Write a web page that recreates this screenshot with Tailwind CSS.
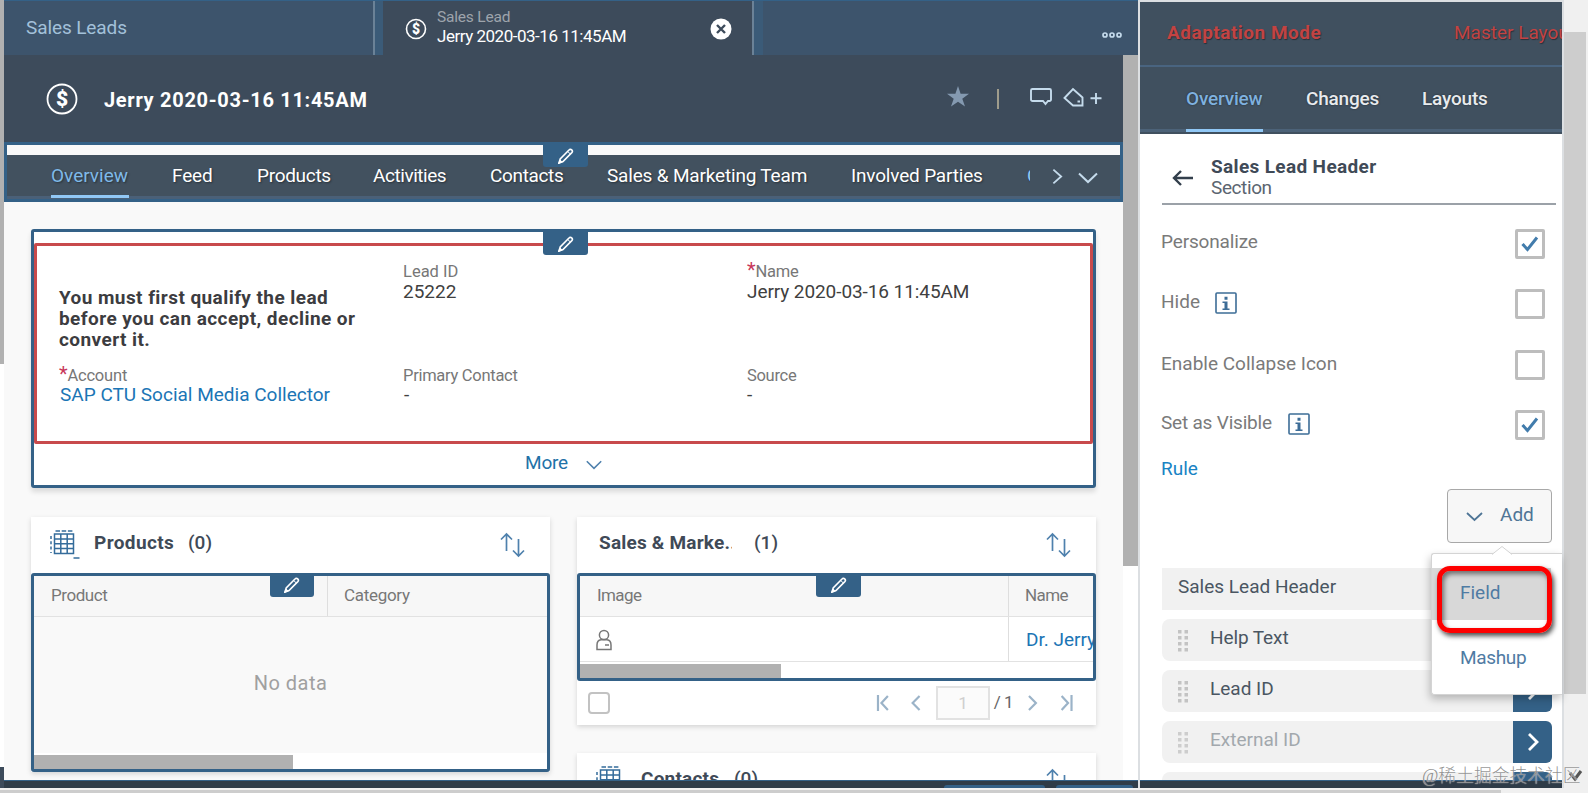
<!DOCTYPE html>
<html lang="en">
<head>
    <meta charset="UTF-8">
    <meta name="viewport" content="width=device-width, initial-scale=1.0">
    <title>Sales Lead - Adaptation Mode</title>
    <script src="https://cdn.jsdelivr.net/npm/@tailwindcss/browser@4"></script>
</head>
<body class="overflow-hidden bg-white font-['Roboto','Noto_Sans_CJK_SC',sans-serif]">

    <!-- Shared icons -->
    <svg class="hidden">
        <symbol id="pencil" viewBox="0 0 16 16">
            <path d="M1 15l1.2-4L11 2a1.8 1.8 0 0 1 2.8 2.6L5 13.600z" fill="none" stroke="currentColor" stroke-width="1.6"/>
            <path d="M9.700 3.500l3 2.800M.6 15.400l3.600-1.400-2.200-2z" fill="currentColor" stroke="currentColor"/>
        </symbol>
        <symbol id="table" viewBox="0 0 30 30">
            <g fill="none" stroke="currentColor" stroke-width="1.500">
                <path d="M4.500 4h19v19.500h-19zM10.800 4v19.500M17.200 4v19.500M4.500 9h19M4.500 13.800h19M4.500 18.600h19"/>
                <path d="M5.500 1h17" stroke-dasharray="4.500 1.700"/>
                <path d="M1 6v17" stroke-dasharray="3 2.300"/>
                <path d="M23.500 28h6"/>
            </g>
        </symbol>
        <symbol id="sort" viewBox="0 0 26 26">
            <path d="M6.500 19V2M1 7.500L6.500 2 12 7.500M18.500 7v17M13 18.500l5.500 5.500 5.500-5.500" fill="none" stroke="currentColor" stroke-width="1.700"/>
        </symbol>
        <symbol id="down" viewBox="0 0 20 12">
            <path d="M1 1.500l9 8.500 9-8.500" fill="none" stroke="currentColor" stroke-width="2"/>
        </symbol>
        <symbol id="right" viewBox="0 0 12 18">
            <path d="M1.500 1.500L10 9l-8.500 7.500" fill="none" stroke="currentColor" stroke-width="2"/>
        </symbol>
        <symbol id="check" viewBox="0 0 18 16">
            <path d="M1.500 8l5 5.500L16 1.500" fill="none" stroke="currentColor" stroke-width="3"/>
        </symbol>
        <symbol id="info" viewBox="0 0 22 22">
            <rect x="1" y="1" width="20" height="20" rx="1" fill="none" stroke="currentColor" stroke-width="1.600"/>
            <path d="M9.500 4.800h3v3h-3zM7.500 9.500h5v7h2V18h-7v-1.500h2v-5.500h-2z" fill="currentColor"/>
        </symbol>
        <symbol id="grip" viewBox="0 0 10 22">
            <path d="M0 0h3.500v3.500H0zM6.500 0H10v3.500H6.500zM0 6h3.500v3.500H0zM6.500 6H10v3.500H6.500zM0 12h3.500v3.500H0zM6.500 12H10v3.500H6.500zM0 18h3.500v3.500H0zM6.500 18H10v3.500H6.500z" fill="currentColor"/>
        </symbol>
    </svg>

    <div class="relative flex h-[793px] w-[1588px] flex-col overflow-hidden whitespace-nowrap">
        <div class="flex h-[788px]">

            <!-- Left edge -->
            <div class="flex w-1 flex-col">
                <div class="h-[364px] bg-[#b1b1b1]"></div>
                <div class="h-[403px] bg-white"></div>
                <div class="h-[21px] bg-[#3d4b5b]"></div>
            </div>

            <!-- Main area -->
            <main class="flex w-[1134px] flex-col overflow-hidden bg-[#f9f9f9]">
                <div class="flex h-[55px] border-t border-[#346187] bg-[#3b5b78]">
                    <div class="flex w-[371px] items-center border-r-2 border-[#6b8297] bg-[#3d546c] pl-[22px] text-[19px] text-[#a3c1da]">
                        <span class="tracking-[-0.1px]">Sales Leads</span>
                    </div>
                    <div class="ml-2 flex w-[371px] border-r-2 border-[#6b8297] bg-[#3d4b5b] pl-[22px]">
                        <svg class="mt-[17px] size-[22px]" viewBox="0 0 22 22">
                            <circle cx="11" cy="11" r="9.500" fill="none" stroke="#fff" stroke-width="1.600"/>
                            <text x="11" y="16" text-anchor="middle" font-size="14" font-weight="900" fill="#fff">$</text>
                        </svg>
                        <div class="ml-[10px] w-[273px] pt-[6px]">
                            <div class="text-[15.5px] leading-[20px] tracking-[-0.2px] text-[#9da4ac]">Sales Lead</div>
                            <div class="text-[17px] leading-[18px] tracking-[-0.48px] text-white">Jerry 2020-03-16 11:45AM</div>
                        </div>
                        <svg class="mt-[17px] size-[22px]" viewBox="0 0 22 22">
                            <circle cx="11" cy="11" r="10.500" fill="#fff"/>
                            <path d="M7 7l8 8M15 7l-8 8" stroke="#3d4b5b" stroke-width="2.400"/>
                        </svg>
                    </div>
                    <div class="ml-[9px] flex flex-1 justify-end bg-[#3d546c] pr-4">
                        <svg class="mt-[31px] h-[6px] w-5" viewBox="0 0 20 6" fill="none" stroke="#c5dbec" stroke-width="1.700">
                            <circle cx="3" cy="3" r="2"/><circle cx="10" cy="3" r="2"/><circle cx="17" cy="3" r="2"/>
                        </svg>
                    </div>
                </div>

                <div class="flex h-[733px]">
                    <div class="flex w-[1119px] flex-col">
                        <header class="flex h-[87px] shrink-0 items-center bg-[#3d4b5b] pb-[1px] pl-[42px] pr-[21px]">
                            <svg class="mt-0.5 size-8" viewBox="0 0 32 32">
                                <circle cx="16" cy="16" r="14.500" fill="none" stroke="#fff" stroke-width="1.800"/>
                                <text x="16" y="23.300" text-anchor="middle" font-size="21" font-weight="900" fill="#fff">$</text>
                            </svg>
                            <h1 class="ml-[26px] mt-1 flex-1 text-[20px] font-bold tracking-[0.7px] text-white">Jerry 2020-03-16 11:45AM</h1>
                            <svg class="mb-[3px] h-[21px] w-[22px]" viewBox="0 0 22 21"><path d="M11 0l2.600 7.800H22l-6.700 5L18 20.500l-7-4.800-7 4.800 2.700-7.700L0 7.800h8.400z" fill="#8499b0"/></svg>
                            <div class="ml-[28px] mt-0.5 h-5 w-[2px] bg-[#9f9c8c]"></div>
                            <svg class="mb-[3px] ml-[31px] h-5 w-[72px]" viewBox="0 0 72 20" fill="none" stroke="#c5dbec" stroke-width="1.900">
                                <path d="M2.500 2h17a1.500 1.500 0 0 1 1.500 1.500v9a1.500 1.500 0 0 1-1.500 1.500h-1.500l-2.500 3-2.500-3H2.500A1.500 1.500 0 0 1 1 12.500v-9A1.500 1.500 0 0 1 2.500 2z"/>
                                <path d="M34.500 11l8.500-9 9.500 8.500v8H43zM47.500 14.500h2.500M60.500 11.300h11M66 6v11"/>
                            </svg>
                        </header>

                        <!-- Section navigation -->
                        <nav class="relative flex h-[60px] shrink-0 flex-col border-[3px] border-[#346187] bg-[#f9f9f9] pt-[10px]">
                            <div class="flex flex-1 border-b-[3px] border-[#4a6078] bg-[#42515f] pl-11 text-[19px] leading-[23px] tracking-[-0.18px] text-white [text-shadow:1px_1px_2px_rgba(0,0,0,0.4)]">
                                <div class="relative mr-[43px] w-[78px] pt-[9px] tracking-normal text-[#7fb9e8]">Overview
                                    <div class="absolute -bottom-0.5 left-0 h-[3px] w-full bg-[#91c8f6]"></div>
                                </div>
                                <div class="w-[85px] pt-[9px]">Feed</div>
                                <div class="w-[116px] pt-[9px] tracking-[-0.3px]">Products</div>
                                <div class="w-[117px] pt-[9px] tracking-[-0.45px]">Activities</div>
                                <div class="w-[117px] pt-[9px] tracking-[-0.35px]">Contacts</div>
                                <div class="w-[244px] pt-[9px]">Sales &amp; Marketing Team</div>
                                <div class="w-[176px] pt-[9px]">Involved Parties</div>
                                <div class="w-[3px] overflow-hidden pt-[9px] text-[#91c8f6]">C</div>
                                <svg class="ml-[22px] mt-[13px] h-[17px] w-[11px] text-[#c5dbec]"><use href="#right"/></svg>
                                <svg class="ml-[15px] mt-[17px] h-[12px] w-[20px] text-[#c5dbec]"><use href="#down"/></svg>
                            </div>
                            <div class="absolute left-[536px] top-0 flex h-[22px] w-[45px] items-center justify-center rounded-b-[3px] bg-[#346187] text-white">
                                <svg class="size-4"><use href="#pencil"/></svg>
                            </div>
                        </nav>

                        <div class="px-[27px] pt-[27px]">
                            <!-- Lead header -->
                            <section class="relative h-[259px] rounded-[3px] border-[3px] border-[#346187] bg-white pt-[11px] shadow-[0_4px_5px_rgba(0,0,0,0.12)]">
                                <div class="grid h-[201px] grid-cols-[344px_344px_1fr] grid-rows-[104px_1fr] rounded-[2px] border-[3px] border-[#c84a4c] pl-[22px] pt-[15px] text-[19px] leading-[21px] text-[#404040]">
                                    <div class="pt-[26px] font-bold tracking-[0.43px] text-[#3c3c40]">You must first qualify the lead<br>before you can accept, decline or<br>convert it.</div>
                                    <div>
                                        <div class="pt-px text-[16.5px] leading-[19px] text-[#777]">Lead ID</div>
                                        <div>25222</div>
                                    </div>
                                    <div>
                                        <div class="pt-px text-[16.5px] leading-[19px] tracking-[-0.2px] text-[#777]"><span class="text-[20px] leading-[1px] text-[#c8385a]">*</span>Name</div>
                                        <div class="tracking-[-0.08px]">Jerry 2020-03-16 11:45AM</div>
                                    </div>
                                    <div>
                                        <div class="pt-px text-[16.5px] leading-[19px] tracking-[-0.2px] text-[#777]"><span class="text-[20px] leading-[1px] text-[#c8385a]">*</span>Account</div>
                                        <div class="-mt-px pl-px text-[#1b75b5]">SAP CTU Social Media Collector</div>
                                    </div>
                                    <div>
                                        <div class="pt-px text-[16.5px] leading-[19px] tracking-[-0.28px] text-[#777]">Primary Contact</div>
                                        <div class="-mt-px pl-px">-</div>
                                    </div>
                                    <div>
                                        <div class="pt-px text-[16.5px] leading-[19px] tracking-[-0.3px] text-[#777]">Source</div>
                                        <div class="-mt-px">-</div>
                                    </div>
                                </div>
                                <div class="flex h-[38px] items-center pl-[491px] text-[19px] text-[#1f72a8]">
                                    <span class="w-[61px] tracking-[-0.2px]">More</span>
                                    <svg class="mt-[3px] h-[10px] w-[16px] text-[#4f81ad]" viewBox="0 0 20 12" preserveAspectRatio="none"><use href="#down"/></svg>
                                </div>
                                <div class="absolute left-[509px] top-0 flex h-[23px] w-[45px] items-center justify-center rounded-b-[3px] bg-[#346187] text-white">
                                    <svg class="size-4"><use href="#pencil"/></svg>
                                </div>
                            </section>

                            <div class="mt-[29px] flex gap-[27px]">
                                <!-- Products -->
                                <section class="h-[255px] w-[519px] bg-white shadow-[0_2px_5px_rgba(0,0,0,0.15)]">
                                    <div class="flex h-14 items-center pl-[19px] pr-6 text-[19px] font-bold text-[#3f4a57]">
                                        <svg class="h-[30px] w-[30px] text-[#346c9b]"><use href="#table"/></svg>
                                        <span class="ml-[14px] w-[94px] pb-[3px] tracking-[0.4px]">Products</span>
                                        <span class="flex-1 pb-[3px] font-medium">(0)</span>
                                        <svg class="size-[26px] text-[#4f81ad]"><use href="#sort"/></svg>
                                    </div>
                                    <div class="relative h-[199px] rounded-[3px] border-[3px] border-[#346187] bg-[#f9f9f9]">
                                        <div class="flex h-[41px] border-b border-[#e2e2e2] bg-[#f7f7f7] text-[17px] leading-[39px] tracking-[-0.3px] text-[#777]">
                                            <div class="w-[294px] border-r border-[#dedede] pl-[17px] tracking-[-0.45px]">Product</div>
                                            <div class="pl-4">Category</div>
                                        </div>
                                        <div class="flex h-[136px] items-center justify-center pb-[5px] text-[20px] tracking-[0.5px] text-[#a0a0a0]">No data</div>
                                        <div class="h-[16px] bg-white pt-[2px]">
                                            <div class="h-[14px] w-[259px] bg-[#b1b1b1]"></div>
                                        </div>
                                        <div class="absolute left-[236px] top-0 flex h-[21px] w-[44px] items-center justify-center rounded-b-[3px] bg-[#346187] pb-1 text-white">
                                            <svg class="size-4"><use href="#pencil"/></svg>
                                        </div>
                                    </div>
                                </section>

                                <div class="w-[519px]">
                                    <!-- Sales & marketing team -->
                                    <section class="h-[208px] bg-white shadow-[0_2px_5px_rgba(0,0,0,0.15)]">
                                        <div class="flex h-14 items-center pl-[22px] pr-6 text-[19px] font-bold text-[#3f4a57]">
                                            <span class="mr-[22px] w-[133px] overflow-hidden pb-[3px] tracking-[0.2px]">Sales &amp; Marke..</span>
                                            <span class="flex-1 pb-[3px] font-medium">(1)</span>
                                            <svg class="size-[26px] text-[#4f81ad]"><use href="#sort"/></svg>
                                        </div>
                                        <div class="relative h-[108px] rounded-[3px] border-[3px] border-[#346187]">
                                            <div class="flex h-[41px] border-b border-[#e2e2e2] bg-[#f7f7f7] text-[17px] leading-[39px] tracking-[-0.6px] text-[#777]">
                                                <div class="w-[429px] border-r border-[#dedede] pl-[17px]">Image</div>
                                                <div class="pl-4">Name</div>
                                            </div>
                                            <div class="flex h-[45px] overflow-hidden border-b border-[#e2e2e2] text-[19px] leading-[45px] text-[#1b75b5]">
                                                <div class="w-[429px] border-r border-[#dedede] pl-[16px] pt-[12px]">
                                                    <svg class="h-[22px] w-[16px]" viewBox="0 0 16 22" fill="none" stroke="#777" stroke-width="1.500">
                                                        <circle cx="8" cy="6" r="4.600"/>
                                                        <path d="M1 20.500v-4.500c0-3 1.500-5 4-5.300h6c2.500.3 4 2.300 4 5.300v4.500zM9 16h4"/>
                                                    </svg>
                                                </div>
                                                <div class="w-[84px] overflow-hidden pl-[17px]">Dr. Jerry</div>
                                            </div>
                                            <div class="h-[16px] pt-[2px]">
                                                <div class="h-[14px] w-[201px] bg-[#b1b1b1]"></div>
                                            </div>
                                            <div class="absolute left-[236px] top-0 flex h-[21px] w-[45px] items-center justify-center rounded-b-[3px] bg-[#346187] pb-1 text-white">
                                                <svg class="size-4"><use href="#pencil"/></svg>
                                            </div>
                                        </div>
                                        <div class="flex h-11 items-center pl-[11px] pr-[23px] text-[17px] text-[#666]">
                                            <div class="mr-[266px] size-[22px] rounded-[4px] border-2 border-[#c2c2c2]"></div>
                                            <svg class="h-[18px] w-[46px]" viewBox="0 0 46 18" fill="none" stroke="#9bb3c8" stroke-width="2.200">
                                                <path d="M2 1v16M12 2L5.500 9l6.500 7M44 2l-7 7 7 7"/>
                                            </svg>
                                            <div class="ml-[15px] flex h-[34px] w-[54px] items-center justify-center border-2 border-[#e2e2e2] bg-[#fbfbfb] pt-0.5 text-[#cfcfcf]">1</div>
                                            <span class="ml-[4px] w-[32px] tracking-[-0.5px]">/ 1</span>
                                            <svg class="h-[18px] w-[48px]" viewBox="0 0 48 18" fill="none" stroke="#9bb3c8" stroke-width="2.200">
                                                <path d="M3 2l7 7-7 7M36 2l6.500 7-6.500 7M46 1v16"/>
                                            </svg>
                                        </div>
                                    </section>
                                    <!-- Contacts -->
                                    <section class="mt-[28px] h-14 bg-white shadow-[0_2px_5px_rgba(0,0,0,0.15)]">
                                        <div class="flex h-14 items-center pl-[19px] pr-6 text-[19px] font-bold text-[#3f4a57]">
                                            <svg class="h-[30px] w-[30px] text-[#346c9b]"><use href="#table"/></svg>
                                            <span class="ml-[15px] w-[93px] pb-[3px] tracking-[0.2px]">Contacts</span>
                                            <span class="flex-1 pb-[3px] font-medium">(0)</span>
                                            <svg class="size-[26px] text-[#4f81ad]"><use href="#sort"/></svg>
                                        </div>
                                    </section>
                                </div>
                            </div>
                        </div>
                    </div>
                    <!-- Vertical scrollbar -->
                    <div class="w-[15px] bg-white">
                        <div class="h-[511px] bg-[#b1b1b1]"></div>
                    </div>
                </div>
            </main>

            <!-- Adaptation panel -->
            <aside class="flex w-[426px] flex-col border-l-2 border-r-2 border-[#dcdfe2] bg-white">
                <div class="h-[134px] shrink-0 border-t-2 border-[#dcdfe2] bg-[#40505f]">
                    <div class="flex h-[65px] items-center overflow-hidden border-b-2 border-[#496480] pl-[27px] text-[19px] text-[#c24343] [text-shadow:1px_1px_1px_rgba(0,0,0,0.4)]">
                        <span class="w-[287px] shrink-0 font-bold tracking-[0.5px]">Adaptation Mode</span>
                        <span class="shrink-0">Master Layout</span>
                    </div>
                    <div class="relative flex h-[65px] items-center border-b-[3px] border-[#4c6278] pl-[46px] pt-[3px] text-[19px] font-medium tracking-[-0.2px] text-[#e8ebee] [text-shadow:0_0_2px_rgba(0,0,0,0.5)]">
                        <span class="w-[120px] text-[#7fb1df]">Overview</span>
                        <span class="w-[116px]">Changes</span>
                        <span>Layouts</span>
                        <div class="absolute -bottom-[3px] left-[46px] h-[3px] w-[77px] bg-[#91c8f6]"></div>
                    </div>
                </div>

                <div class="h-[654px] overflow-hidden pl-[22px]">
                    <div class="flex h-[71px] w-[394px] border-b-2 border-[#9ba1a8] pl-[10px] pt-[22px]">
                        <svg class="mr-[18px] mt-[14px] h-4 w-[21px]" viewBox="0 0 21 16" fill="none" stroke="#333f4c" stroke-width="2.400"><path d="M21 8H2M9 1L2 8l7 7"/></svg>
                        <div class="text-[19px] leading-[21px] text-[#3f4a57]">
                            <div class="font-bold tracking-[0.35px]">Sales Lead Header</div>
                            <div class="tracking-[-0.4px] text-[#5b6570]">Section</div>
                        </div>
                    </div>
                    <div class="-ml-px w-[384px] pt-[9px] text-[19px] text-[#7a7a7a]">
                        <div class="flex h-[60px] items-center">
                            <span class="flex-1 pb-1 tracking-[-0.15px]">Personalize</span>
                            <div class="flex size-[30px] items-center justify-center rounded-[2px] border-[3px] border-[#bdbdbd] text-[#427cac]"><svg class="h-4 w-[18px]"><use href="#check"/></svg></div>
                        </div>
                        <div class="flex h-[60px] items-center">
                            <span class="w-[54px] pb-1">Hide</span>
                            <svg class="mb-[3px] mr-auto size-[22px] text-[#3d6d97]"><use href="#info"/></svg>
                            <div class="size-[30px] rounded-[2px] border-[3px] border-[#bdbdbd]"></div>
                        </div>
                        <div class="flex h-[61px] items-center">
                            <span class="flex-1 pb-px">Enable Collapse Icon</span>
                            <div class="size-[30px] rounded-[2px] border-[3px] border-[#bdbdbd]"></div>
                        </div>
                        <div class="flex h-[60px] items-center">
                            <span class="w-[127px] pb-[3px] tracking-[-0.2px]">Set as Visible</span>
                            <svg class="mb-[3px] mr-auto size-[22px] text-[#3d6d97]"><use href="#info"/></svg>
                            <div class="flex size-[30px] items-center justify-center rounded-[2px] border-[3px] border-[#bdbdbd] text-[#427cac]"><svg class="h-4 w-[18px]"><use href="#check"/></svg></div>
                        </div>
                        <div class="h-[34px] leading-[28px] text-[#1883c4]">Rule</div>
                    </div>
                    <div class="ml-[285px] flex h-[54px] w-[105px] items-center rounded-[4px] border border-[#a8a8a8] bg-[#f7f7f7] pb-0.5 pl-[18px] text-[19px] text-[#4f7596]">
                        <svg class="mr-[17px] mt-1 h-[10px] w-[17px]"><path d="M1 1l7.500 7L16 1" fill="none" stroke="currentColor" stroke-width="1.800"/></svg>
                        <span>Add</span>
                    </div>

                    <div class="mt-[25px] flex w-[390px] flex-col gap-[9px] text-[19px] text-[#4a5662]">
                        <div class="h-[42px] bg-[#f1f1f1] pl-4 leading-[38px]">Sales Lead Header</div>
                        <div class="flex h-[42px] rounded-lg bg-[#f1f1f1] pl-4 leading-[38px]">
                            <svg class="mr-[22px] mt-[11px] h-[22px] w-[10px] text-[#c3c3c3]"><use href="#grip"/></svg><span class="tracking-[-0.1px]">Help Text</span>
                        </div>
                        <div class="flex h-[42px] rounded-lg bg-[#f1f1f1] pl-4 leading-[38px]">
                            <svg class="mr-[22px] mt-[11px] h-[22px] w-[10px] text-[#c3c3c3]"><use href="#grip"/></svg><span>Lead ID</span>
                            <div class="ml-auto flex w-[39px] items-center justify-center rounded-r-md bg-[#346187] text-white"><svg class="h-[18px] w-3"><path d="M2 1l8 8-8 8" fill="none" stroke="currentColor" stroke-width="2.800"/></svg></div>
                        </div>
                        <div class="flex h-[42px] rounded-lg bg-[#f1f1f1] pl-4 leading-[38px] text-[#a2a8ad]">
                            <svg class="mr-[22px] mt-[11px] h-[22px] w-[10px] text-[#cdcdcd]"><use href="#grip"/></svg><span>External ID</span>
                            <div class="ml-auto flex w-[39px] items-center justify-center rounded-r-md bg-[#346187] text-white"><svg class="h-[18px] w-3"><path d="M2 1l8 8-8 8" fill="none" stroke="currentColor" stroke-width="2.800"/></svg></div>
                        </div>
                        <div class="flex h-[42px] rounded-lg bg-[#f1f1f1]">
                            <div class="ml-auto w-[39px] rounded-r-md bg-[#346187]"></div>
                        </div>
                    </div>
                </div>
            </aside>

            <!-- Page scrollbar -->
            <div class="w-[24px] bg-[#f0f0f0] pr-0.5 pt-8">
                <div class="h-[662px] bg-[#cdcdcd]"></div>
            </div>
        </div>
        <div class="h-[5px] bg-[#f0f0f0] pt-0.5">
            <div class="h-[3px] w-[1501px] bg-[#cdcdcd]"></div>
        </div>

        <!-- Footer bar over the scrolled content -->
        <div class="absolute left-1 top-[780px] flex h-2 w-[1134px] items-end border-t border-[#346187] bg-[#2f3c48] pl-[940px]">
            <div class="mr-[11px] h-[3px] w-[101px] rounded-t-sm bg-[#346187]"></div>
            <div class="h-[3px] w-[77px] rounded-t-sm bg-[#346187]"></div>
        </div>
        <div class="absolute left-[1140px] top-[780px] h-2 w-[422px] border-t border-[#346187] bg-[#2f3c48]"></div>

        <!-- Add menu -->
        <div class="absolute left-[1431px] top-[553px] h-[142px] w-[131px] rounded-l-[3px] border-y border-l border-[#d4d4d4] bg-white text-[19px] text-[#4f7ba3] shadow-[-1px_4px_8px_rgba(0,0,0,0.25)]">
            <svg class="absolute left-[60px] top-[-8px] h-[9px] w-[20px]"><path d="M0 8.500l10-8 10 8" fill="#fff" stroke="#d4d4d4"/></svg>
            <div class="mt-[14px] h-[52px] w-[119px] bg-[#d8d8d8] pl-7 leading-[50px]">Field</div>
            <div class="mt-[12px] pl-7 leading-[52px] tracking-[-0.35px]">Mashup</div>
        </div>
        <div class="absolute left-[1437px] top-[566px] h-[67px] w-[115px] rounded-[13px] border-[5px] border-[#fe0000] shadow-[2px_3px_5px_rgba(0,0,0,0.7),inset_2px_3px_5px_rgba(0,0,0,0.5)]"></div>

        <svg class="absolute left-[1568px] top-[768px] h-[16px] w-[16px]" viewBox="0 0 16 16"><path d="M2 5l5 6L13 3" fill="none" stroke="#555" stroke-width="3"/></svg>
        <div class="absolute left-[1422px] top-[764px] text-[17.8px] font-light leading-[24px] text-[#777]/80 font-['Liberation_Serif','Noto_Sans_CJK_SC',serif] [text-shadow:0_0_1px_#fff]">@稀土掘金技术社区</div>
    </div>
</body>
</html>
